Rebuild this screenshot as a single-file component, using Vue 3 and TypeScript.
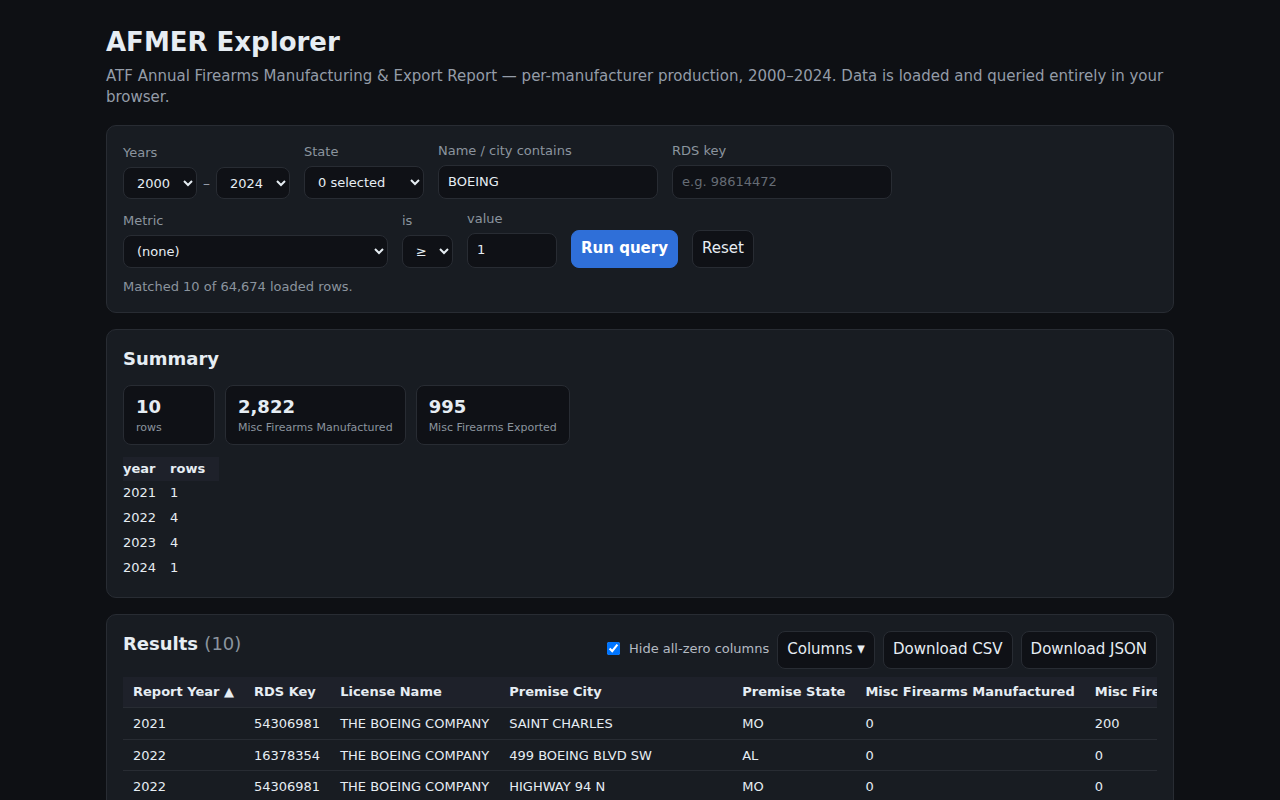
<script setup lang="ts">
import { ref } from "vue";

const years = ["2000", "2024"];
const nameFilter = ref("BOEING");
const hideZero = ref(true);

const metrics = [
  { value: "10", label: "rows" },
  { value: "2,822", label: "Misc Firearms Manufactured" },
  { value: "995", label: "Misc Firearms Exported" },
];

const byYear = [
  { year: 2021, rows: 1 },
  { year: 2022, rows: 4 },
  { year: 2023, rows: 4 },
  { year: 2024, rows: 1 },
];

const columns = [
  "Report Year ▲",
  "RDS Key",
  "License Name",
  "Premise City",
  "Premise State",
  "Misc Firearms Manufactured",
  "Misc Firearms Exported",
];

const results = [
  ["2021", "54306981", "THE BOEING COMPANY", "SAINT CHARLES", "MO", "0", "200"],
  ["2022", "16378354", "THE BOEING COMPANY", "499 BOEING BLVD SW", "AL", "0", "0"],
  ["2022", "54306981", "THE BOEING COMPANY", "HIGHWAY 94 N", "MO", "0", "0"],
];
</script>

<template>
  <main class="page">
    <header class="head">
      <h1>AFMER Explorer</h1>
      <p>ATF Annual Firearms Manufacturing &amp; Export Report — per-manufacturer production, 2000–2024. Data is loaded and queried entirely in your browser.</p>
    </header>

    <section class="panel filters">
      <div class="row">
        <div class="field">
          <label>Years</label>
          <div class="range">
            <select class="sel-year"><option>{{ years[0] }}</option></select>
            <span>–</span>
            <select class="sel-year"><option>{{ years[1] }}</option></select>
          </div>
        </div>
        <div class="field">
          <label>State</label>
          <select class="sel-state"><option>0 selected</option></select>
        </div>
        <div class="field">
          <label>Name / city contains</label>
          <input v-model="nameFilter" class="inp-wide" type="text" />
        </div>
        <div class="field">
          <label>RDS key</label>
          <input class="inp-wide" type="text" placeholder="e.g. 98614472" />
        </div>
      </div>
      <div class="row">
        <div class="field">
          <label>Metric</label>
          <select class="sel-metric"><option>(none)</option></select>
        </div>
        <div class="field">
          <label>is</label>
          <select class="sel-op"><option>≥</option></select>
        </div>
        <div class="field">
          <label>value</label>
          <input class="inp-value" type="text" value="1" />
        </div>
        <button class="btn primary">Run query</button>
        <button class="btn">Reset</button>
      </div>
      <p class="status">Matched 10 of 64,674 loaded rows.</p>
    </section>

    <section class="panel summary">
      <h2>Summary</h2>
      <div class="cards">
        <div v-for="m in metrics" :key="m.label" class="card">
          <div class="card-value">{{ m.value }}</div>
          <div class="card-label">{{ m.label }}</div>
        </div>
      </div>
      <table class="mini">
        <thead>
          <tr><th>year</th><th>rows</th></tr>
        </thead>
        <tbody>
          <tr v-for="y in byYear" :key="y.year">
            <td>{{ y.year }}</td>
            <td>{{ y.rows }}</td>
          </tr>
        </tbody>
      </table>
    </section>

    <section class="panel results">
      <div class="results-head">
        <h2>Results <span class="count">(10)</span></h2>
        <div class="actions">
          <label class="check"><input v-model="hideZero" type="checkbox" /> Hide all-zero columns</label>
          <button class="btn">Columns ▾</button>
          <button class="btn">Download CSV</button>
          <button class="btn">Download JSON</button>
        </div>
      </div>
      <div class="table-wrap">
        <table class="grid">
          <thead>
            <tr><th v-for="c in columns" :key="c">{{ c }}</th></tr>
          </thead>
          <tbody>
            <tr v-for="(r, i) in results" :key="i">
              <td v-for="(v, j) in r" :key="j">{{ v }}</td>
            </tr>
          </tbody>
        </table>
      </div>
    </section>
  </main>
</template>

<style>
html,
body {
  background: #0e1014;
}
</style>

<style scoped>
.page {
  box-sizing: border-box;
  max-width: 1100px;
  margin: 0 auto;
  padding: 25px 16px;
  font-family: "DejaVu Sans", sans-serif;
  color: #e6edf3;
  font-size: 14px;
}

.head h1 {
  margin: 0 0 7px;
  font-size: 26px;
  line-height: 34px;
}

.head p {
  margin: 0 0 17px;
  font-size: 15px;
  line-height: 21px;
  color: #949ca8;
}

.panel {
  background: #181c22;
  border: 1px solid #282c33;
  border-radius: 10px;
  padding: 16px;
  margin-bottom: 16px;
}

.filters {
  padding-top: 17px;
}

.row {
  display: flex;
  align-items: flex-end;
  gap: 14px;
}

.row + .row {
  margin-top: 12px;
}

.field {
  display: flex;
  flex-direction: column;
  gap: 6px;
}

.field label {
  font-size: 13px;
  line-height: 16px;
  color: #8b949e;
}

.range {
  display: flex;
  align-items: center;
  gap: 6px;
  color: #949ca8;
}

select,
input[type="text"] {
  box-sizing: border-box;
  background: #0f1116;
  border: 1px solid #282c33;
  border-radius: 8px;
  color: #e6edf3;
  font: inherit;
  font-size: 13px;
}

select {
  height: 33px;
  padding: 0 6px 0 9px;
}

input[type="text"] {
  height: 34px;
  padding: 0 9px 2px;
}

input::placeholder {
  color: #666c75;
}

.sel-year {
  width: 74px;
  height: 32px;
}

.sel-state {
  width: 120px;
}

.sel-metric {
  width: 265px;
}

.sel-op {
  width: 51px;
}

.inp-wide {
  width: 220px;
}

input[type="text"].inp-value {
  width: 90px;
  height: 35px;
}

.btn {
  box-sizing: border-box;
  height: 38px;
  padding: 0 9px 4px;
  background: #0f1116;
  border: 1px solid #282c33;
  border-radius: 8px;
  color: #e6edf3;
  font-family: "DejaVu Sans", sans-serif;
  font-stretch: condensed;
  font-size: 16.7px;
  white-space: nowrap;
}

.btn.primary {
  background: #2f6fd8;
  border-color: #2f6fd8;
  color: #fff;
  font-weight: 700;
}

.status {
  margin: 11px 0 1px;
  font-size: 13px;
  line-height: 16px;
  color: #8b949e;
}

h2 {
  margin: 0;
  font-size: 18px;
  line-height: 26px;
}

.cards {
  display: flex;
  gap: 10px;
  margin: 13px 0 12px;
}

.card {
  box-sizing: border-box;
  min-width: 92px;
  background: #0f1116;
  border: 1px solid #282c33;
  border-radius: 8px;
  padding: 10px 12px 8px;
}

.card-value {
  font-size: 18px;
  font-weight: 700;
  line-height: 22px;
  margin-bottom: 2px;
}

.card-label {
  font-size: 11px;
  line-height: 16px;
  color: #8b949e;
}

.mini {
  border-collapse: collapse;
  font-size: 13px;
}

.mini th {
  background: #1e212a;
  text-align: left;
  padding: 4px 14px 4px 0;
  line-height: 16px;
}

.mini td {
  padding: 4px 14px 5px 0;
  line-height: 16px;
}

.results-head {
  display: flex;
  justify-content: space-between;
  align-items: flex-start;
  margin-bottom: 8px;
}

.count {
  font-weight: 400;
  color: #8b949e;
}

.actions {
  display: flex;
  align-items: center;
  gap: 8px;
}

.check {
  display: flex;
  align-items: center;
  gap: 6px;
  padding-bottom: 3px;
  font-size: 13px;
  color: #b4bac2;
}

.check input {
  margin: 0 3px;
}

.table-wrap {
  overflow-x: auto;
}

.grid {
  border-collapse: collapse;
  font-size: 13px;
  white-space: nowrap;
}

.grid th {
  background: #1e212a;
  text-align: left;
  padding: 7px 10px;
  line-height: 16px;
  border-bottom: 1px solid #282c33;
}

.grid th:nth-child(4) {
  min-width: 213px;
}

.grid td {
  padding: 8px 10px 6px;
  line-height: 16.5px;
  border-bottom: 1px solid #282c33;
}
</style>
